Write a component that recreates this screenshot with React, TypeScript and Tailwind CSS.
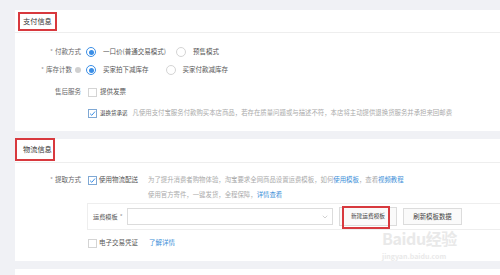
import { ChevronDown } from "lucide-react";

const font = { fontFamily: '"Noto Sans CJK SC", "Noto Sans", sans-serif' };

function Radio({ checked }: { checked?: boolean }) {
  return (
    <span
      className={`w-[10px] h-[10px] rounded-full border flex items-center justify-center shrink-0 bg-white ${
        checked ? "border-[#3a8ee6]" : "border-[#d4d4d4]"
      }`}
    >
      {checked && <span className="w-[5px] h-[5px] rounded-full bg-[#3a8ee6]" />}
    </span>
  );
}

function Check({ checked }: { checked?: boolean }) {
  return (
    <span
      className={`ml-[2px] w-[9px] h-[9px] border flex items-center justify-center shrink-0 bg-white ${
        checked ? "border-[#7fa8d4]" : "border-[#d4d4d4]"
      }`}
    >
      {checked && (
        <svg viewBox="0 0 10 10" className="w-[7px] h-[7px]">
          <path d="M1.5 5.2 L4 7.6 L8.6 2.2" fill="none" stroke="#3a8ee6" strokeWidth="1.4" />
        </svg>
      )}
    </span>
  );
}

function Label({ children, star }: { children: React.ReactNode; star?: boolean }) {
  return (
    <div className="w-[66px] shrink-0 flex items-center justify-end text-[6.5px] text-[#666]">
      {star && <span className="mr-[2px] text-[#999]">*</span>}
      {children}
    </div>
  );
}

export default function App() {
  return (
    <div
      style={font}
      className="relative w-[500px] h-[275px] overflow-hidden bg-[#f0f1f5] pl-[15px] pt-[10px] flex flex-col gap-[8px]"
    >
      {/* 支付信息 */}
      <section className="bg-white h-[121px] shrink-0">
        <div className="h-[23px] border-b border-[#eeeeee] flex items-center pl-[3px]">
          <span className="h-[19px] w-[39px] border-2 border-[#d8393e] flex items-center pl-[3px] text-[7.2px] text-[#333]">
            支付信息
          </span>
        </div>
        <div className="pt-[10px] flex flex-col">
          <div className="h-[18px] flex items-center gap-[5px]">
            <Label star>付款方式</Label>
            <Radio checked />
            <span className="ml-[2px] text-[6.5px] text-[#555]">一口价(普通交易模式)</span>
            <span className="ml-[5px]"><Radio /></span>
            <span className="ml-[2px] text-[6.5px] text-[#555]">预售模式</span>
          </div>
          <div className="h-[18px] flex items-center gap-[5px]">
            <Label star>
              库存计数
              <span className="ml-[3px] w-[6px] h-[6px] rounded-full bg-[#d0d0d0]" />
            </Label>
            <Radio checked />
            <span className="ml-[2px] text-[6.5px] text-[#555]">买家拍下减库存</span>
            <span className="ml-[12px]"><Radio /></span>
            <span className="ml-[2px] text-[6.5px] text-[#555]">买家付款减库存</span>
          </div>
          <div className="mt-[4px] h-[18px] flex items-center gap-[5px]">
            <Label>售后服务</Label>
            <Check />
            <span className="ml-[-2px] text-[6.5px] text-[#555]">提供发票</span>
          </div>
          <div className="mt-[3px] h-[18px] flex items-center gap-[5px]">
            <div className="w-[66px] shrink-0" />
            <Check checked />
            <span className="ml-[-2px] text-[5.5px] text-[#444]">退换货承诺</span>
            <span className="text-[6.4px] text-[#aaa] whitespace-nowrap">
              凡使用支付宝服务付款购买本店商品，若存在质量问题或与描述不符，本店将主动提供退换货服务并承担来回邮费
            </span>
          </div>
        </div>
      </section>

      {/* 物流信息 */}
      <section className="bg-white h-[122px] shrink-0">
        <div className="h-[24px] border-b border-[#eeeeee] flex items-start">
          <span className="mt-[-1px] h-[23px] w-[40px] border-2 border-[#d8393e] flex items-center pl-[6px] text-[7.2px] text-[#333] whitespace-nowrap">
            物流信息
          </span>
        </div>
        <div className="pt-[8px] flex flex-col">
          <div className="flex items-start gap-[5px]">
            <div className="h-[18px] flex items-center gap-[5px]">
              <Label star>提取方式</Label>
              <Check checked />
              <span className="ml-[-3px] text-[6.5px] text-[#555]">使用物流配送</span>
            </div>
            <div className="ml-[5px] pt-[1px] leading-[15px] text-[6.4px] text-[#aaa] whitespace-nowrap">
              <div>
                为了提升消费者购物体验，淘宝要求全网商品设置运费模板，如何
                <span className="text-[#3d8fd8]">使用模板</span>，查看
                <span className="text-[#3d8fd8]">视频教程</span>
              </div>
              <div>
                使用官方寄件，一键发货，全程保障，<span className="text-[#3d8fd8]">详情查看</span>
              </div>
            </div>
          </div>

          <div className="mt-[1px] ml-[72px] h-[27px] border border-r-0 border-[#eeeeee] flex items-center pl-[5px]">
            <span className="w-[34px] text-[6.2px] text-[#555] whitespace-nowrap">
              运费模板<span className="ml-[2px] text-[#999]">*</span>
            </span>
            <div className="h-[17px] w-[206px] border border-[#dcdcdc] flex items-center justify-end pr-[3px]">
              <ChevronDown className="w-[8px] h-[8px] text-[#bbb]" strokeWidth={2} />
            </div>
            <div className="relative ml-[6px] h-[19px] w-[58px] border border-[#dcdcdc] bg-[#fafafa] flex items-center justify-center text-[5.7px] text-[#444]">
              新建运费模板
              <span className="absolute left-[2px] top-[-2px] w-[48px] h-[23px] border-2 border-[#d8393e]" />
            </div>
            <div className="ml-[6px] h-[17px] w-[59px] border border-[#dcdcdc] bg-[#fafafa] flex items-center justify-center text-[6.4px] text-[#444]">
              刷新模板数据
            </div>
          </div>

          <div className="mt-[4px] h-[18px] flex items-center gap-[5px]">
            <div className="w-[66px] shrink-0" />
            <Check />
            <span className="ml-[-3px] text-[6.5px] text-[#555]">电子交易凭证</span>
            <span className="ml-[6px] text-[6.5px] text-[#3d8fd8]">了解详情</span>
          </div>
        </div>
      </section>

      <section className="bg-white flex-1" />

      {/* watermark */}
      <div className="absolute left-[382px] top-[229px] flex flex-col gap-[4px] text-[#e9e9e9] pointer-events-none">
        <div className="text-[16px] leading-[19px] font-bold tracking-tight whitespace-nowrap">Baidu经验</div>
        <div className="text-[7px] leading-[8px] font-bold whitespace-nowrap">jingyan.baidu.com</div>
      </div>
    </div>
  );
}
